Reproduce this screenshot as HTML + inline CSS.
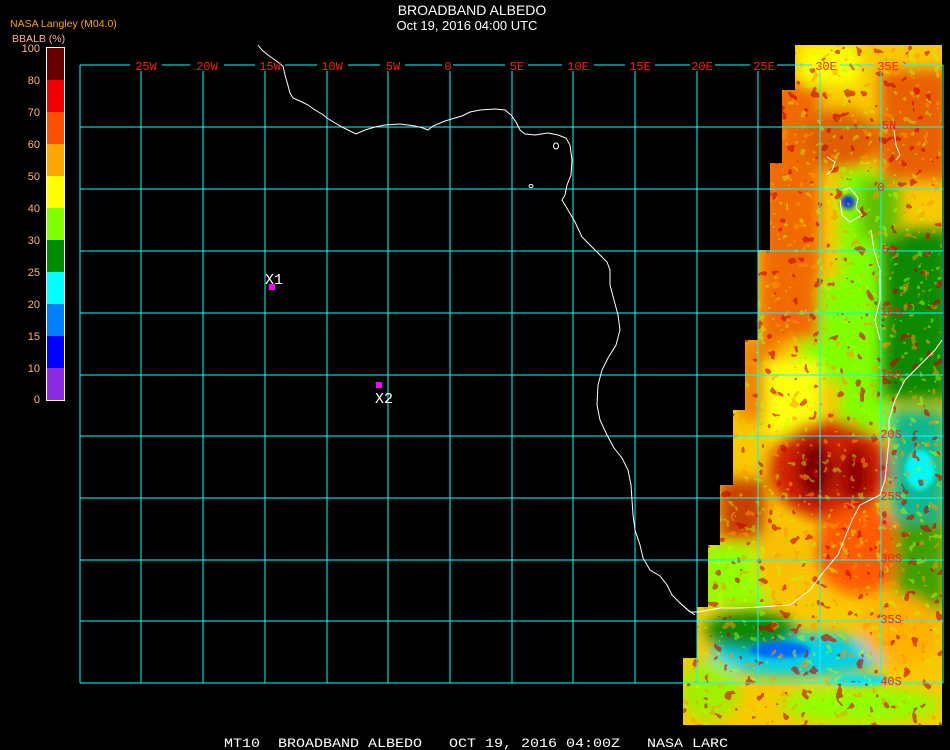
<!DOCTYPE html>
<html><head><meta charset="utf-8"><style>
html,body{margin:0;padding:0;background:#000;width:950px;height:750px;overflow:hidden}
svg{display:block}
</style></head><body>
<svg width="950" height="750" viewBox="0 0 950 750" xmlns="http://www.w3.org/2000/svg">
<defs>
<clipPath id="dc"><polygon points="795,45 942,45 942,725 683,725 683,658 697,658 697,607 708,607 708,545 720,545 720,485 733,485 733,410 745,410 745,340 758,340 758,250 770,250 770,163 782,163 782,90 795,90"/></clipPath>
<filter id="b1"><feGaussianBlur stdDeviation="7"/></filter>
<filter id="b2"><feGaussianBlur stdDeviation="2.5"/></filter>
<filter id="nz1" x="0" y="0" width="1" height="1">
<feTurbulence type="fractalNoise" baseFrequency="0.09" numOctaves="2" seed="3" result="t"/>
<feColorMatrix in="t" type="matrix" values="0 0 0 0 0.6  0 0 0 0 0  0 0 0 0 0  1.6 0 0 0 -0.45"/>
<feComponentTransfer><feFuncA type="discrete" tableValues="0 0 0 0 1 1"/></feComponentTransfer>
</filter>
<filter id="nz2" x="0" y="0" width="1" height="1">
<feTurbulence type="fractalNoise" baseFrequency="0.1" numOctaves="2" seed="11" result="t"/>
<feColorMatrix in="t" type="matrix" values="0 0 0 0 1  0 0 0 0 0.3  0 0 0 0 0  0 1.6 0 0 -0.45"/>
<feComponentTransfer><feFuncA type="discrete" tableValues="0 0 0 0 1 1"/></feComponentTransfer>
</filter>
<filter id="nz3" x="0" y="0" width="1" height="1">
<feTurbulence type="fractalNoise" baseFrequency="0.12" numOctaves="2" seed="27" result="t"/>
<feColorMatrix in="t" type="matrix" values="0 0 0 0 0.5  0 0 0 0 1  0 0 0 0 0  0 0 1.6 0 -0.45"/>
<feComponentTransfer><feFuncA type="discrete" tableValues="0 0 0 0 1 1"/></feComponentTransfer>
</filter>
</defs>
<rect width="950" height="750" fill="#000"/>
<g clip-path="url(#dc)">
<rect x="660" y="40" width="290" height="700" fill="#f8c800"/>
<g filter="url(#b1)">
<rect x="840" y="170" width="50" height="260" fill="#80ff00"/>
<rect x="800" y="280" width="60" height="100" fill="#80ff00"/>
<rect x="880" y="230" width="70" height="170" fill="#0a8a00"/>
<rect x="860" y="180" width="40" height="60" fill="#60c000"/>
<rect x="880" y="70" width="70" height="110" fill="#e86000"/>
<rect x="760" y="80" width="60" height="260" fill="#f06a00"/>
<rect x="740" y="340" width="40" height="80" fill="#f08000"/>
<rect x="800" y="45" width="60" height="40" fill="#ffff00"/>
<ellipse cx="840" cy="140" rx="40" ry="30" fill="#e06000"/>
<rect x="765" y="360" width="55" height="75" fill="#ffff10"/>
<ellipse cx="830" cy="470" rx="60" ry="50" fill="#d02000"/>
<ellipse cx="815" cy="470" rx="18" ry="30" fill="#800000"/>
<ellipse cx="855" cy="475" rx="15" ry="30" fill="#900000"/>
<ellipse cx="860" cy="550" rx="45" ry="45" fill="#ff5a00"/>
<rect x="890" y="410" width="55" height="110" fill="#10b890"/>
<rect x="895" y="520" width="50" height="90" fill="#40a000"/>
<rect x="720" y="480" width="45" height="60" fill="#c84000"/>
<rect x="700" y="545" width="70" height="60" fill="#90ff00"/>
<ellipse cx="800" cy="655" rx="90" ry="22" fill="#00d0e8"/>
<ellipse cx="750" cy="630" rx="45" ry="20" fill="#0a8a00"/>
<ellipse cx="900" cy="630" rx="40" ry="35" fill="#ffb000"/>
<ellipse cx="860" cy="705" rx="80" ry="18" fill="#90ff00"/>
<ellipse cx="710" cy="690" rx="30" ry="30" fill="#a0f000"/>
<ellipse cx="780" cy="560" rx="25" ry="40" fill="#f8c000"/>
</g>
<g filter="url(#b2)" opacity="0.9">
<ellipse cx="848" cy="202" rx="7" ry="7" fill="#0020ff"/>
<ellipse cx="780" cy="650" rx="30" ry="8" fill="#0060ff"/>
<ellipse cx="860" cy="680" rx="30" ry="6" fill="#00e0ff"/>
<ellipse cx="920" cy="470" rx="15" ry="20" fill="#00ffff"/>
</g>
<rect x="660" y="40" width="290" height="700" filter="url(#nz2)" opacity="0.55"/>
<rect x="660" y="40" width="290" height="700" filter="url(#nz3)" opacity="0.45"/>
<rect x="660" y="40" width="290" height="700" filter="url(#nz1)" opacity="0.6"/>
</g>
<g stroke="#00ffff" stroke-width="1.4" fill="none" shape-rendering="crispEdges">
<line x1="80" y1="65" x2="130" y2="65"/><line x1="162" y1="65" x2="190" y2="65"/>
<line x1="224" y1="65" x2="255" y2="65"/><line x1="285" y1="65" x2="317" y2="65"/>
<line x1="348" y1="65" x2="380" y2="65"/><line x1="405" y1="65" x2="442" y2="65"/>
<line x1="453" y1="65" x2="505" y2="65"/><line x1="528" y1="65" x2="562" y2="65"/>
<line x1="594" y1="65" x2="625" y2="65"/><line x1="655" y1="65" x2="690" y2="65"/>
<line x1="715" y1="65" x2="750" y2="65"/><line x1="777" y1="65" x2="812" y2="65"/>
<line x1="840" y1="65" x2="875" y2="65"/><line x1="902" y1="65" x2="943" y2="65"/>
<line x1="80" y1="127" x2="943" y2="127"/><line x1="80" y1="189" x2="943" y2="189"/>
<line x1="80" y1="251" x2="943" y2="251"/><line x1="80" y1="313" x2="943" y2="313"/>
<line x1="80" y1="375" x2="943" y2="375"/><line x1="80" y1="436" x2="943" y2="436"/>
<line x1="80" y1="498" x2="943" y2="498"/><line x1="80" y1="560" x2="943" y2="560"/>
<line x1="80" y1="621" x2="943" y2="621"/><line x1="80" y1="683" x2="943" y2="683"/>
<line x1="80" y1="65" x2="80" y2="683"/><line x1="141" y1="71" x2="141" y2="683"/>
<line x1="203" y1="71" x2="203" y2="683"/><line x1="265" y1="71" x2="265" y2="683"/>
<line x1="327" y1="71" x2="327" y2="683"/><line x1="388" y1="71" x2="388" y2="683"/>
<line x1="450" y1="71" x2="450" y2="683"/><line x1="512" y1="71" x2="512" y2="683"/>
<line x1="573" y1="71" x2="573" y2="683"/><line x1="635" y1="71" x2="635" y2="683"/>
<line x1="697" y1="71" x2="697" y2="683"/><line x1="758" y1="71" x2="758" y2="683"/>
<line x1="820" y1="71" x2="820" y2="683"/><line x1="881" y1="71" x2="881" y2="683"/>
<line x1="943" y1="65" x2="943" y2="683"/>
</g>
<polyline fill="none" stroke="#fff" stroke-width="1" points="258,45 262,50 268,55 275,60 283,66 285,75 287,82 290,93 293,98 300,101 308,105 315,110 322,114 327,118 335,123 342,127 350,131 356,134 365,130 375,127 385,125 400,124 415,126 423,128 428,130 433,126 445,121 455,118 462,116 470,112 480,110 495,109 505,110 511,115 516,122 520,130 525,134 535,135 548,133 558,135 566,138 570,145 572,160 571,175 567,185 565,195 562,200 568,210 575,222 582,237 590,245 600,255 607,262 610,270 610,285 614,300 618,315 620,330 616,345 608,358 602,370 598,385 597,405 600,420 607,435 614,448 622,458 628,470 631,485 632,500 633,515 635,530 640,545 643,558 650,570 660,576 667,585 672,595 680,603 688,610 695,615"/>
<polyline fill="none" stroke="#fff" stroke-width="1" points="680,603 690,612 698,612 720,608 740,608 760,607 790,605 810,590 825,570 838,555 852,520 860,505 870,500 880,495 885,480 887,460 889,440 889,420 895,400 905,380 915,370 935,350 942,340"/>
<polyline fill="none" stroke="#fff" stroke-width="1" points="894,130 896,145 900,155 896,160"/>
<polyline fill="none" stroke="#fff" stroke-width="1" points="827,157 835,162 832,170 826,175"/>
<polyline fill="none" stroke="#fff" stroke-width="1" points="843,190 850,188 858,198 856,208 862,215 850,222 842,215 840,200"/>
<polyline fill="none" stroke="#fff" stroke-width="1" points="871,230 874,250 880,270 880,300 875,320 880,340"/>
<ellipse cx="556" cy="146" rx="2.5" ry="3" fill="none" stroke="#fff"/>
<ellipse cx="531" cy="186" rx="2" ry="1.5" fill="none" stroke="#fff"/>
<g fill="#ff1a1a" font-family="Liberation Mono, monospace" font-size="12" text-anchor="middle">
<text x="146" y="70">25W</text><text x="207" y="70">20W</text><text x="270" y="70">15W</text>
<text x="332" y="70">10W</text><text x="393" y="70">5W</text><text x="448" y="70">0</text>
<text x="517" y="70">5E</text><text x="578" y="70">10E</text><text x="640" y="70">15E</text>
<text x="702" y="70">20E</text><text x="764" y="70">25E</text><text x="826" y="70">30E</text><text x="888" y="70">35E</text>
<text x="889" y="129">5N</text><text x="881" y="191">0</text><text x="889" y="253">5S</text>
<text x="891" y="315">10S</text><text x="891" y="377">15S</text><text x="891" y="438">20S</text>
<text x="891" y="500">25S</text><text x="891" y="562">30S</text><text x="891" y="623">35S</text><text x="891" y="685">40S</text>
</g>
<rect x="269" y="284" width="6" height="6" fill="#ff00ff"/>
<rect x="376" y="382" width="6" height="6" fill="#ff00ff"/>
<g fill="#fff" font-family="Liberation Mono, monospace" font-size="15">
<text x="265" y="284">X1</text><text x="375" y="403">X2</text>
</g>
<g fill="#fff" font-family="Liberation Sans, sans-serif" text-anchor="middle">
<text x="472" y="15" font-size="14">BROADBAND ALBEDO</text>
<text x="467" y="30" font-size="13">Oct 19, 2016 04:00 UTC</text>
</g>
<text x="224" y="747" fill="#fff" font-family="Liberation Mono, monospace" font-size="13" textLength="504" lengthAdjust="spacingAndGlyphs" xml:space="preserve">MT10  BROADBAND ALBEDO   OCT 19, 2016 04:00Z   NASA LARC</text>
<text x="10" y="27" fill="#ffa500" font-family="Liberation Sans, sans-serif" font-size="10.5">NASA Langley (M04.0)</text>
<text x="12" y="42" fill="#ffb090" font-family="Liberation Sans, sans-serif" font-size="10.5">BBALB (%)</text>
<rect x="46" y="47" width="19" height="354" fill="#fff"/>
<rect x="47" y="48" width="17" height="32" fill="#660000"/>
<rect x="47" y="80" width="17" height="32" fill="#f00000"/>
<rect x="47" y="112" width="17" height="32" fill="#ff5000"/>
<rect x="47" y="144" width="17" height="32" fill="#ffa500"/>
<rect x="47" y="176" width="17" height="32" fill="#ffff00"/>
<rect x="47" y="208" width="17" height="32" fill="#80ff00"/>
<rect x="47" y="240" width="17" height="32" fill="#008c00"/>
<rect x="47" y="272" width="17" height="32" fill="#00ffff"/>
<rect x="47" y="304" width="17" height="32" fill="#0080ff"/>
<rect x="47" y="336" width="17" height="32" fill="#0000ff"/>
<rect x="47" y="368" width="17" height="32" fill="#8a2be2"/>
<g fill="#ffb090" font-family="Liberation Sans, sans-serif" font-size="11" text-anchor="end">
<text x="40" y="52">100</text><text x="40" y="84">80</text><text x="40" y="116">70</text>
<text x="40" y="148">60</text><text x="40" y="180">50</text><text x="40" y="212">40</text>
<text x="40" y="244">30</text><text x="40" y="276">25</text><text x="40" y="308">20</text>
<text x="40" y="340">15</text><text x="40" y="372">10</text><text x="40" y="403">0</text>
</g>
</svg>
</body></html>
